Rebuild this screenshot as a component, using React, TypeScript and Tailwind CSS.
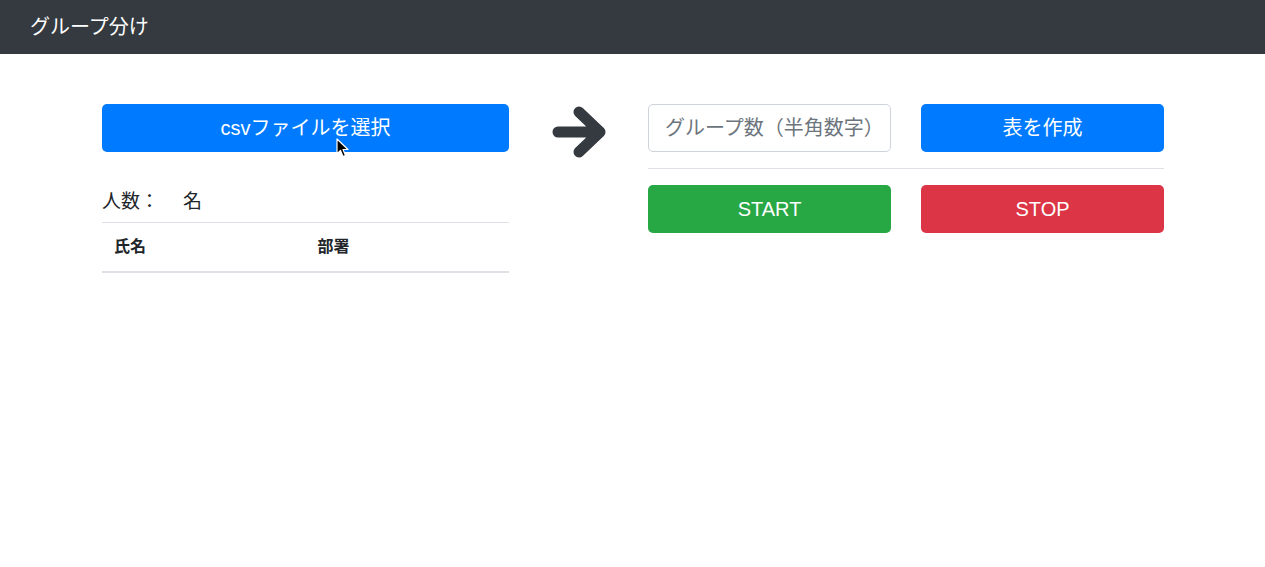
import React from 'react';

const font = { fontFamily: '"Liberation Sans", "Noto Sans CJK JP", sans-serif' };

const App = () => {
  return (
    <div className="min-h-[567px] w-full bg-white text-[#212529]" style={font}>
      <nav className="h-[54px] bg-[#343a40] flex items-center px-[30px]">
        <span className="text-white text-[20px] leading-[30px]">グループ分け</span>
      </nav>

      <main className="flex pt-[50px] pl-[102px]">
        {/* left column */}
        <div className="w-[407px]">
          <div className="relative">
            <button className="w-full h-[48px] rounded-[5px] bg-[#007bff] text-white text-[20px]">
              csvファイルを選択
            </button>
            <svg className="absolute left-[234px] top-[34px]" width="14" height="20" viewBox="0 0 14 20">
              <path d="M1 1 L1 16 L4.5 12.5 L7 18.5 L9.5 17.5 L7 11.5 L12 11.5 Z" fill="#000" stroke="#fff" strokeWidth="1.2" strokeLinejoin="round" />
            </svg>
          </div>
          <h5 className="mt-[38px] mb-[8px] text-[19px] leading-[24px]">
            人数：<span className="ml-[24px]">名</span>
          </h5>
          <div className="grid grid-cols-2 border-t border-[#dee2e6] border-b-2 text-[16px] font-bold">
            <div className="p-[12px] leading-[24px]">氏名</div>
            <div className="p-[12px] leading-[24px]">部署</div>
          </div>
        </div>

        {/* arrow */}
        <div className="ml-[43px] mt-[1px] w-[56px] h-[54px]">
          <svg width="56" height="54" viewBox="0 0 56 54">
            <path d="M6 27 L48 27 M27 7 L48 27 L27 47" fill="none" stroke="#343a40" strokeWidth="11" strokeLinecap="round" strokeLinejoin="round" />
          </svg>
        </div>

        {/* right column */}
        <div className="ml-[40px] w-[516px]">
          <div className="flex gap-[30px]">
            <input
              className="w-[243px] h-[48px] rounded-[5px] border border-[#ced4da] px-[16px] text-[20px] placeholder:text-[#6c757d] outline-none"
              style={font}
              placeholder="グループ数（半角数字）"
            />
            <button className="w-[243px] h-[48px] rounded-[5px] bg-[#007bff] text-white text-[20px]">
              表を作成
            </button>
          </div>
          <hr className="my-[16px] border-t border-[#dee2e6]" />
          <div className="flex gap-[30px]">
            <button className="w-[243px] h-[48px] rounded-[5px] bg-[#28a745] text-white text-[20px]">
              START
            </button>
            <button className="w-[243px] h-[48px] rounded-[5px] bg-[#dc3545] text-white text-[20px]">
              STOP
            </button>
          </div>
        </div>
      </main>
    </div>
  );
};

export default App;
